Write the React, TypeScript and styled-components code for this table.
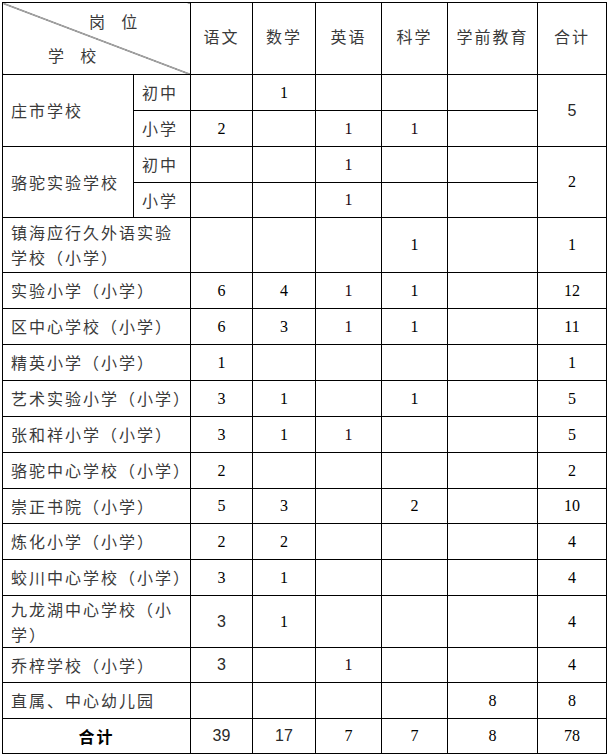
import React from "react";
import styled, { createGlobalStyle } from "styled-components";

const GlobalStyle = createGlobalStyle`
  html, body {
    margin: 0;
    padding: 0;
    background: #fff;
  }
  body {
    padding: 2px 0 0 2px;
    font-family: "Noto Sans CJK SC", "Liberation Serif", serif;
  }
`;

const Table = styled.table`
  border-collapse: collapse;
  table-layout: fixed;
  width: 605px;
`;

const Row = styled.tr<{ $h: number }>`
  height: ${(p) => p.$h}px;
`;

const Cell = styled.td`
  border: 1px solid #000;
  padding: 0;
  text-align: center;
  vertical-align: middle;
  font-family: "Liberation Serif", "Noto Sans CJK SC", serif;
  font-size: 16px;
  color: #000;
`;

const NumCell = styled(Cell)<{ $tone?: "red" | "sans" }>`
  color: ${(p) =>
    p.$tone === "red" ? "#22060f" : p.$tone === "sans" ? "#2a2a2a" : "#000"};
  font-family: ${(p) =>
    p.$tone === "sans"
      ? `"Liberation Sans", sans-serif`
      : `"Liberation Serif", serif`};
  font-size: 16px;
  font-weight: 400;
`;

const NameCell = styled(Cell)`
  text-align: left;
  padding-left: 8px;
  font-family: "Noto Sans CJK SC", sans-serif;
  font-size: 16px;
  letter-spacing: 2px;
  line-height: 25px;
  color: #3a3a3a;
  white-space: nowrap;
`;

const HeadCell = styled(Cell)`
  font-family: "Noto Sans CJK SC", sans-serif;
  letter-spacing: 2px;
  color: #3a3a3a;
  padding-bottom: 5px;
`;

const CornerCell = styled.td`
  border: 1px solid #000;
  padding: 0;
  background: linear-gradient(
    to top right,
    transparent calc(50% - 0.7px),
    #000 50%,
    transparent calc(50% + 0.7px)
  );
`;

const Corner = styled.div`
  display: grid;
  grid-template-rows: 1fr 1fr;
  height: 71px;
  font-family: "Noto Sans CJK SC", sans-serif;
  font-size: 16px;
  color: #3a3a3a;
`;

const CornerText = styled.span<{ $pad: number; $shift: number }>`
  display: flex;
  align-items: center;
  padding-left: ${(p) => p.$pad}px;
  margin-top: ${(p) => p.$shift}px;
  white-space: pre;
  letter-spacing: 3px;
`;

const TotalLabel = styled(Cell)`
  font-family: "Noto Sans CJK SC", sans-serif;
  font-weight: 700;
  letter-spacing: 2px;
`;

type Tone = "red" | "sans" | undefined;
type Val = string | [string, Tone];

const subjects = ["语文", "数学", "英语", "科学", "学前教育", "合计"];

const toneFor = (i: number): Tone => (i === 2 ? "red" : undefined);

function Nums({ vals }: { vals: Val[] }) {
  return (
    <>
      {vals.map((v, i) => {
        const [text, tone] = Array.isArray(v) ? v : [v, toneFor(i)];
        return (
          <NumCell key={i} $tone={tone}>
            {text}
          </NumCell>
        );
      })}
    </>
  );
}

const singles: { name: React.ReactNode; h: number; vals: Val[] }[] = [
  {
    name: (
      <>
        镇海应行久外语实验
        <br />
        学校（小学）
      </>
    ),
    h: 55,
    vals: ["", "", "", "1", "", "1"],
  },
  { name: "实验小学（小学）", h: 36, vals: ["6", "4", "1", "1", "", "12"] },
  { name: "区中心学校（小学）", h: 36, vals: ["6", "3", "1", "1", "", "11"] },
  { name: "精英小学（小学）", h: 36, vals: ["1", "", "", "", "", "1"] },
  { name: "艺术实验小学（小学）", h: 36, vals: ["3", "1", "", "1", "", "5"] },
  { name: "张和祥小学（小学）", h: 36, vals: ["3", "1", "1", "", "", "5"] },
  { name: "骆驼中心学校（小学）", h: 36, vals: ["2", "", "", "", "", "2"] },
  { name: "崇正书院（小学）", h: 35, vals: ["5", "3", "", "2", "", "10"] },
  { name: "炼化小学（小学）", h: 36, vals: ["2", "2", "", "", "", "4"] },
  { name: "蛟川中心学校（小学）", h: 36, vals: ["3", "1", "", "", "", "4"] },
  {
    name: (
      <>
        九龙湖中心学校（小
        <br />
        学）
      </>
    ),
    h: 52,
    vals: [["3", "sans"], "1", "", "", "", "4"],
  },
  { name: "乔梓学校（小学）", h: 35, vals: [["3", "sans"], "", "1", "", "", "4"] },
  { name: "直属、中心幼儿园", h: 36, vals: ["", "", "", "", "8", "8"] },
];

export default function App() {
  return (
    <>
      <GlobalStyle />
      <Table>
        <colgroup>
          <col style={{ width: 131 }} />
          <col style={{ width: 57 }} />
          <col style={{ width: 62 }} />
          <col style={{ width: 63 }} />
          <col style={{ width: 66 }} />
          <col style={{ width: 66 }} />
          <col style={{ width: 90 }} />
          <col style={{ width: 69 }} />
        </colgroup>
        <tbody>
          <Row $h={71}>
            <CornerCell colSpan={2}>
              <Corner>
                <CornerText $pad={86} $shift={0}>
                  {"岗  位"}
                </CornerText>
                <CornerText $pad={45} $shift={-3}>
                  {"学  校"}
                </CornerText>
              </Corner>
            </CornerCell>
            {subjects.map((s) => (
              <HeadCell key={s}>{s}</HeadCell>
            ))}
          </Row>

          <Row $h={36}>
            <NameCell rowSpan={2}>庄市学校</NameCell>
            <NameCell>初中</NameCell>
            <NumCell />
            <NumCell>1</NumCell>
            <NumCell />
            <NumCell />
            <NumCell />
            <NumCell rowSpan={2} $tone="sans">
              5
            </NumCell>
          </Row>
          <Row $h={36}>
            <NameCell>小学</NameCell>
            <NumCell>2</NumCell>
            <NumCell />
            <NumCell $tone="red">1</NumCell>
            <NumCell $tone="red">1</NumCell>
            <NumCell />
          </Row>

          <Row $h={36}>
            <NameCell rowSpan={2}>骆驼实验学校</NameCell>
            <NameCell>初中</NameCell>
            <NumCell />
            <NumCell />
            <NumCell $tone="red">1</NumCell>
            <NumCell />
            <NumCell />
            <NumCell rowSpan={2}>2</NumCell>
          </Row>
          <Row $h={35}>
            <NameCell>小学</NameCell>
            <NumCell />
            <NumCell />
            <NumCell $tone="red">1</NumCell>
            <NumCell />
            <NumCell />
          </Row>

          {singles.map((r, i) => (
            <Row key={i} $h={r.h}>
              <NameCell colSpan={2}>{r.name}</NameCell>
              <Nums vals={r.vals} />
            </Row>
          ))}

          <Row $h={35}>
            <TotalLabel colSpan={2}>合计</TotalLabel>
            <NumCell $tone="sans">39</NumCell>
            <NumCell $tone="sans">17</NumCell>
            <NumCell>7</NumCell>
            <NumCell>7</NumCell>
            <NumCell>8</NumCell>
            <NumCell>78</NumCell>
          </Row>
        </tbody>
      </Table>
    </>
  );
}
